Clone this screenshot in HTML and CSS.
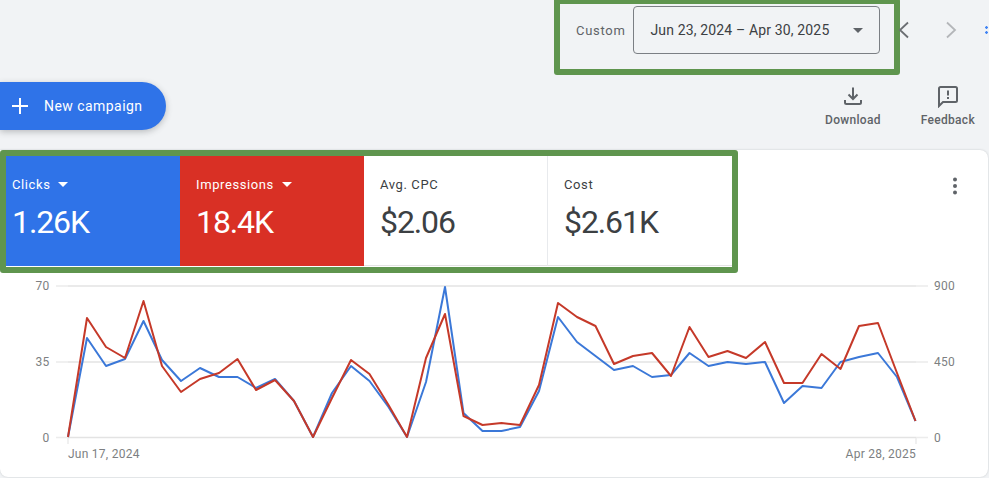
FILE: index.html
```html
<!DOCTYPE html>
<html lang="en">
<head>
	<meta charset="UTF-8">
	<meta name="viewport" content="width=device-width, initial-scale=1.0">
	<title>Campaign overview</title>
	<link rel="stylesheet" href="styles.css">
</head>
<body>
	<div class="top-bar">
		<div class="date-box">
			<span class="date-label">Custom</span>
			<div class="date-select">
				<span>Jun 23, 2024 – Apr 30, 2025</span>
				<span class="caret caret-grey"></span>
			</div>
		</div>
		<div class="pager">
			<svg class="chevron" width="24" height="24" viewBox="0 0 24 24"><path d="M16 4.500 8 12l8 7.500" fill="none" stroke="#6b6e72" stroke-width="1.800"/></svg>
			<svg class="chevron" width="24" height="24" viewBox="0 0 24 24"><path d="M8 4.500l8 7.500-8 7.500" fill="none" stroke="#b4b6b9" stroke-width="1.800"/></svg>
			<span class="more-dots"></span>
		</div>
	</div>

	<div class="action-bar">
		<button class="new-campaign">
			<svg width="24" height="24" viewBox="0 0 24 24"><path d="M12 4v16M4 12h16" stroke="#fff" stroke-width="2"/></svg>
			New campaign
		</button>
		<div class="actions">
			<div class="action">
				<svg width="24" height="24" viewBox="0 0 24 24"><path d="M12 3.500v11M7.500 10.500l4.500 4.500 4.500-4.500M4 16v2.500a1.500 1.500 0 0 0 1.500 1.500h13a1.500 1.500 0 0 0 1.500-1.500V16" fill="none" stroke="#5f6368" stroke-width="2"/></svg>
				<span>Download</span>
			</div>
			<div class="action">
				<svg width="24" height="24" viewBox="0 0 24 24"><path d="M3 4.500A1.500 1.500 0 0 1 4.500 3h15A1.500 1.500 0 0 1 21 4.500v12a1.500 1.500 0 0 1-1.500 1.500H7l-4 4z" fill="none" stroke="#5f6368" stroke-width="2"/><path d="M12 6.500v5M12 13v2" stroke="#5f6368" stroke-width="2"/></svg>
				<span>Feedback</span>
			</div>
		</div>
	</div>

	<div class="card">
		<div class="card-head">
			<div class="tiles">
				<div class="tile tile-blue">
					<div class="tile-name">Clicks <span class="caret"></span></div>
					<div class="tile-value">1.26K</div>
				</div>
				<div class="tile tile-red">
					<div class="tile-name">Impressions <span class="caret"></span></div>
					<div class="tile-value">18.4K</div>
				</div>
				<div class="tile">
					<div class="tile-name">Avg. CPC</div>
					<div class="tile-value">$2.06</div>
				</div>
				<div class="tile">
					<div class="tile-name">Cost</div>
					<div class="tile-value">$2.61K</div>
				</div>
			</div>
			<svg class="kebab" width="24" height="24" viewBox="0 0 24 24" fill="#5f6368"><circle cx="12" cy="5.500" r="2"/><circle cx="12" cy="12" r="2"/><circle cx="12" cy="18.500" r="2"/></svg>
		</div>

		<svg class="chart" width="988" height="204" viewBox="0 273 988 204">
			<g stroke="#e3e3e3" stroke-width="1.500">
				<path d="M68 286H916M68 362H916M68 437.500H916"/>
			</g>
			<g stroke="#ececec" stroke-width="1.500">
				<path d="M56 286H68M56 362H68M56 437.500H68M916 286H928M916 362H928M916 437.500H928M68 438V444M916 438V444"/>
			</g>
			<g class="axis">
				<text x="49.500" y="290" text-anchor="end">70</text>
				<text x="49.500" y="366" text-anchor="end">35</text>
				<text x="49.500" y="442" text-anchor="end">0</text>
				<text x="934" y="290">900</text>
				<text x="934" y="366">450</text>
				<text x="934" y="442">0</text>
				<text x="68" y="458">Jun 17, 2024</text>
				<text x="916" y="458" text-anchor="end">Apr 28, 2025</text>
			</g>
			<polyline class="line" stroke="#3b78d8" points="68,437 87,338 106,366 125,359 143.500,321 162,360 181,381 200,368 219,377 237.500,377 256,388 275,379 294,401 313,437 332,393 351,366 369.500,381 388.500,407 407,437 426,382 445,287 463.500,413 482.500,431 501.500,431 520,427 539,391 558,317 577,342 595.500,356 614,370 633,366 652,377 671,375 689.500,353 708.500,366 727.500,362 746,364 765,362 784,403 802.500,386 821.500,388 840.500,362 859,357 878,353 897,377 915.500,421"/>
			<polyline class="line" stroke="#c53929" points="68,437 87,318 106,347 125,358 143.500,301 162,366 181,392 200,379 219,373 237.500,359 256,390 275,380 294,401 313,437 332,398 351,360 369.500,374 388.500,405 407,437 426,358 445,314 463.500,416 482.500,425 501.500,423 520,425 539,385 558,303 577,317 595.500,326 614,364 633,356 652,353 671,376 689.500,327 708.500,357 727.500,351 746,358 765,342 784,383 802.500,383 821.500,354 840.500,369 859,326 878,323 897,373 915.500,421"/>
		</svg>
	</div>
</body>
</html>
```

FILE: styles.css
```css
* {
	box-sizing: border-box;
}

html, body {
	height: 100%;
}

body {
	margin: 0;
	overflow: hidden;
	background: #f1f3f5;
	color: #3c4043;
	font-family: Roboto, "Liberation Sans", sans-serif;
}

/* top row */
.top-bar {
	height: 77px;
	display: flex;
	justify-content: flex-end;
	align-items: flex-start;
	margin-top: -2px;
}

.date-box {
	width: 346px;
	height: 77px;
	padding: 2px 0 0 16px;
	display: flex;
	align-items: flex-start;
	column-gap: 8px;
	border: 6px solid #5f954e;
	border-radius: 3px;
}

.date-label {
	margin-top: 17px;
	font-size: 13px;
	letter-spacing: 0.7px;
	color: #5f6368;
}

.date-select {
	width: 247px;
	height: 48px;
	padding: 0 16px 0 16px;
	display: flex;
	justify-content: space-between;
	align-items: center;
	border: 1px solid #7b7f84;
	border-radius: 4px;
	font-size: 14px;
	letter-spacing: 0.15px;
}

.caret {
	display: inline-block;
	border-left: 5px solid transparent;
	border-right: 5px solid transparent;
	border-top: 5px solid #fff;
	margin-left: 4px;
	vertical-align: 2px;
}

.caret-grey {
	border-top-color: #5f6368;
}

.pager {
	width: 89px;
	margin-top: 20px;
	display: flex;
	align-items: center;
}

.chevron {
	margin-right: 23px;
}

.pager .chevron:first-child {
	margin-left: -8px;
}

.more-dots {
	width: 3px;
	height: 10px;
	margin-left: -1px;
	background: radial-gradient(circle, #4285f4 1.200px, transparent 1.500px) 0 0 / 3px 5px;
}

/* second row */
.action-bar {
	height: 75px;
	padding: 7px 0 0;
	display: flex;
	justify-content: space-between;
	align-items: flex-start;
}

.new-campaign {
	width: 166px;
	height: 48px;
	padding: 0 0 0 8px;
	display: flex;
	align-items: center;
	column-gap: 12px;
	border: none;
	border-radius: 0 24px 24px 0;
	background: #2f73e8;
	color: #fff;
	font-family: inherit;
	font-size: 14px;
	letter-spacing: 0.45px;
	box-shadow: 0 2px 6px rgba(60, 64, 67, 0.3);
}

.actions {
	display: flex;
	column-gap: 40px;
	padding: 2px 14px 0 0;
}

.action {
	display: flex;
	flex-direction: column;
	align-items: center;
	row-gap: 5px;
	font-size: 12px;
	font-weight: 500;
	letter-spacing: 0.3px;
	color: #5f6368;
}

/* card */
.card {
	width: 988px;
	height: 327px;
	background: #fff;
	border-radius: 0 8px 8px 8px;
	box-shadow: 0 0 2px rgba(60, 64, 67, 0.25);
}

.card-head {
	height: 123px;
	display: flex;
	justify-content: space-between;
	align-items: flex-start;
}

.tiles {
	width: 738px;
	height: 123px;
	display: flex;
	border: 6px solid #5f954e;
	border-radius: 3px;
}

.tile {
	width: 184px;
	height: 110px;
	padding: 21px 0 0 16px;
	border-right: 1px solid #e8eaed;
	border-bottom: 1px solid #e3e3e3;
}

.tile:last-child {
	border-right: none;
}

.tile-blue {
	width: 174px;
	padding-left: 6px;
	border: none;
	background: #2f73e8;
	color: #fff;
}

.tile-red {
	border: none;
	background: #d93025;
	color: #fff;
}

.tile-name {
	font-size: 13px;
	letter-spacing: 0.6px;
}

.tile-value {
	margin-top: 7px;
	font-size: 32px;
	line-height: 46px;
	letter-spacing: -1.1px;
}

.kebab {
	margin: 24px 21px 0 0;
}

.chart {
	display: block;
}

.axis {
	font-size: 12px;
	letter-spacing: 0.25px;
	fill: #7d7f82;
}

.line {
	fill: none;
	stroke-width: 2;
	stroke-linejoin: round;
}
```
